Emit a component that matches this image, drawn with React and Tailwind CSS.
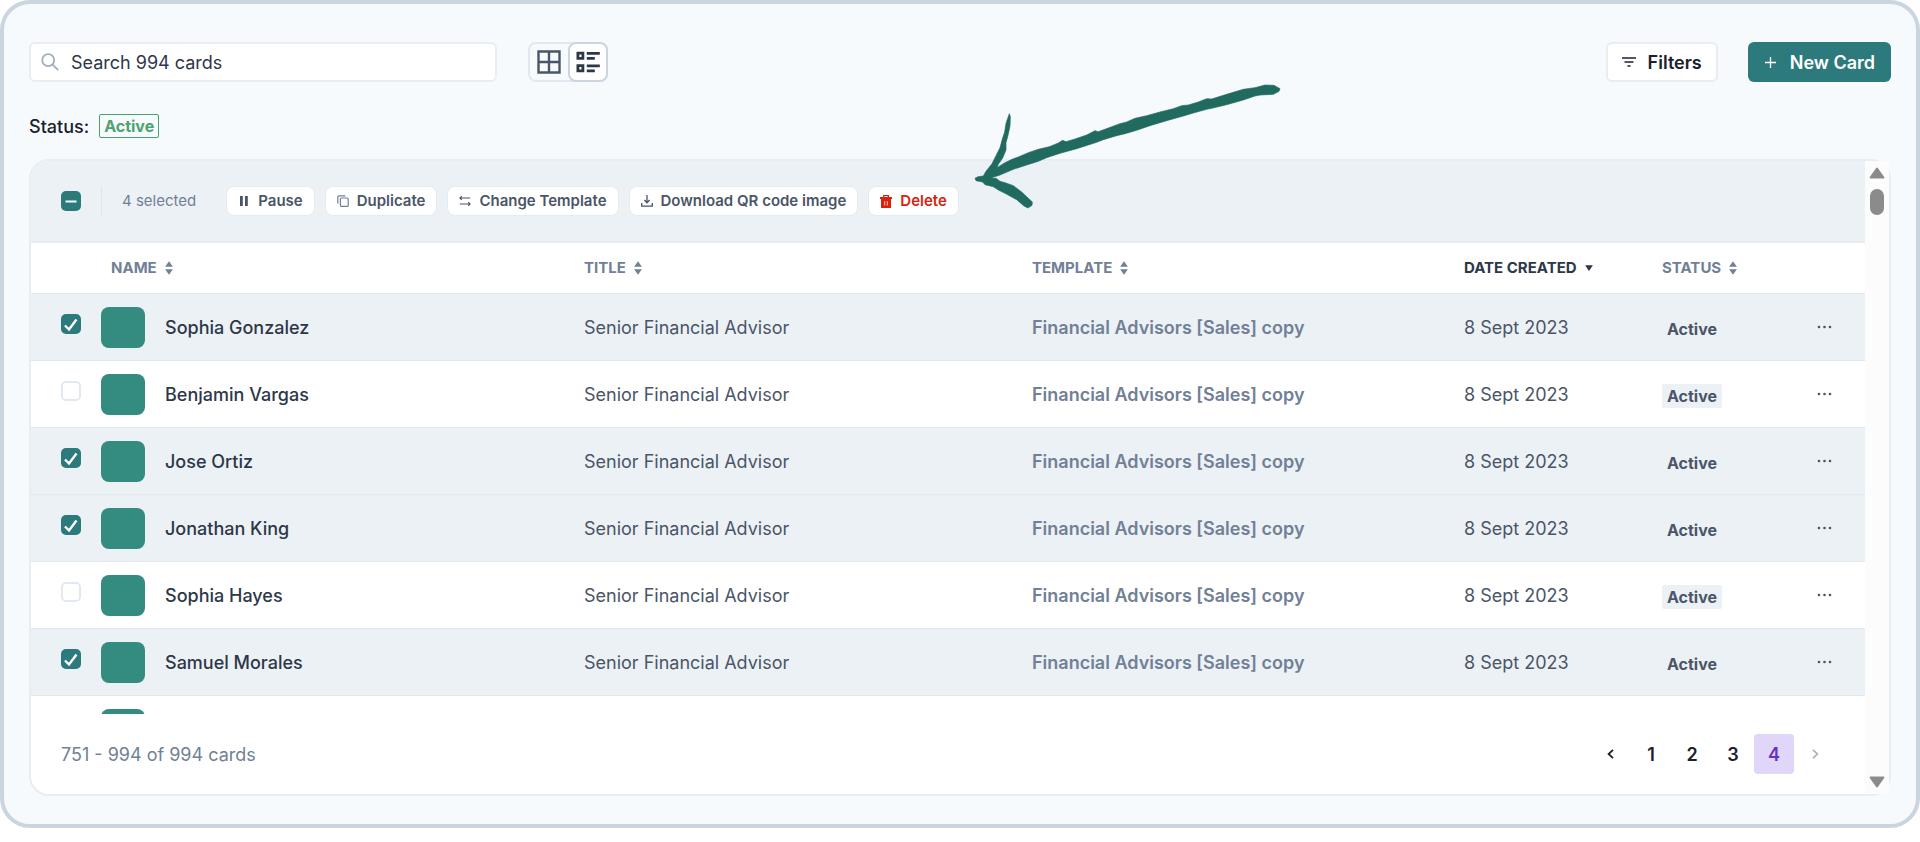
import React, { useState } from 'react';

const rows = [
  { id: 1, name: 'Sophia Gonzalez', checked: true },
  { id: 2, name: 'Benjamin Vargas', checked: false },
  { id: 3, name: 'Jose Ortiz', checked: true },
  { id: 4, name: 'Jonathan King', checked: true },
  { id: 5, name: 'Sophia Hayes', checked: false },
  { id: 6, name: 'Samuel Morales', checked: true },
];

const SortIcon = () => (
  <svg className="w-2 h-[14px]" viewBox="0 0 8 14" fill="currentColor" aria-hidden="true">
    <path d="M4 0.3 7.9 5.8H0.1zM4 13.7 0.1 8.2h7.8z" />
  </svg>
);

const SortDownIcon = () => (
  <svg className="w-2 h-[6px]" viewBox="0 0 8 6" fill="currentColor" aria-hidden="true">
    <path d="M0.1 0.2h7.8L4 5.9z" />
  </svg>
);

const Checkbox = ({ label, checked, onChange }) => (
  <label className="grid w-5 h-5">
    <input
      type="checkbox"
      aria-label={label}
      checked={checked}
      onChange={onChange}
      className="appearance-none col-start-1 row-start-1 w-5 h-5 rounded-[5px] border-2 border-[#e2e8f0] bg-white checked:bg-[#2c7a7b] checked:border-[#2c7a7b]"
    />
    {checked && (
      <svg className="col-start-1 row-start-1 w-5 h-5 pointer-events-none" viewBox="0 0 20 20" fill="none" stroke="#fff" strokeWidth="2.4">
        <path d="M4 11.5 8 15.5 15.5 5.5" />
      </svg>
    )}
  </label>
);

const ActionButton = ({ children, danger }) => (
  <button
    className={
      'flex items-center gap-2 h-[30px] px-[11px] rounded-lg bg-white border border-[#e6ebf1] text-[15px] font-semibold whitespace-nowrap ' +
      (danger ? 'text-[#d9230f]' : 'text-[#4a5568]')
    }
  >
    {children}
  </button>
);

const Toolbar = () => (
  <div className="flex items-center justify-between">
    <div className="flex items-center gap-[31px]">
      <div className="flex items-center gap-3 w-[468px] h-10 px-[10px] rounded-md bg-white border-2 border-[#e8edf3]">
        <svg className="w-[18px] h-[18px] text-[#a0aec0]" viewBox="0 0 18 18" fill="none" stroke="currentColor" strokeWidth="1.8" aria-hidden="true">
          <circle cx="7.2" cy="7.2" r="6" />
          <path d="m11.6 11.6 5.6 5.6" />
        </svg>
        <input
          type="text"
          aria-label="Search cards"
          placeholder="Search 994 cards"
          className="flex-1 min-w-0 outline-none bg-transparent text-[18px] text-[#1a202c] placeholder:text-[#2d3748]"
        />
      </div>
      <div className="flex items-center h-10 rounded-lg border-2 border-[#e2e8f0]">
        <button aria-label="Grid view" className="flex items-center justify-center w-[38px] h-9">
          <svg className="w-6 h-6 text-[#4a5568]" viewBox="0 0 24 24" fill="none" stroke="currentColor" strokeWidth="2.4">
            <path d="M1.5 1.5h21v21h-21zM12 1.5v21M1.5 12h21" />
          </svg>
        </button>
        <button aria-label="List view" className="flex items-center justify-center w-10 h-10 -mr-[2px] rounded-lg bg-white border-2 border-[#cbd5e0]">
          <svg className="w-6 h-[22px] text-[#2d3748]" viewBox="0 0 24 22" fill="none" stroke="currentColor" strokeWidth="2.8">
            <path d="M1.9 2.2h5v5.2h-5zM1.9 14.6h5v5.2h-5zM10.8 2.4h13M10.8 7.4h8M10.8 14.8h13M10.8 19.8h8" />
          </svg>
        </button>
      </div>
    </div>
    <div className="flex items-center gap-[30px]">
      <button className="flex items-center gap-3 h-10 px-[14px] rounded-md bg-white border-2 border-[#e8edf3] text-[18px] font-semibold text-[#1a202c]">
        <svg className="w-[14px] h-[10px]" viewBox="0 0 14 10" stroke="currentColor" strokeWidth="1.6" aria-hidden="true">
          <path d="M0 1h14M2.5 5h9M5.5 9h3" />
        </svg>
        Filters
      </button>
      <button className="flex items-center gap-[14px] h-10 px-4 rounded-md bg-[#2c7a7b] text-[18px] font-semibold text-white">
        <svg className="w-[11px] h-[11px] ml-px" viewBox="0 0 11 11" stroke="currentColor" strokeWidth="1.3" aria-hidden="true">
          <path d="M5.5 0v11M0 5.5h11" />
        </svg>
        New Card
      </button>
    </div>
  </div>
);

const SelectionBar = () => (
  <div className="flex items-center h-[82px] pl-[30px] rounded-tl-[18px] bg-[#ecf1f5] border-b-2 border-[#e6ebf1]">
    <label className="grid w-5 h-5">
      <input
        type="checkbox"
        aria-label="Select all cards"
        defaultChecked
        className="appearance-none col-start-1 row-start-1 w-5 h-5 rounded-[5px] bg-[#2c7a7b]"
      />
      <svg className="col-start-1 row-start-1 w-5 h-5 pointer-events-none" viewBox="0 0 20 20" stroke="#fff" strokeWidth="2">
        <path d="M4.5 10.5h11" />
      </svg>
    </label>
    <div className="w-px h-[30px] ml-5 mr-5 bg-[#dfe5ec]" />
    <span className="mr-[30px] text-[15px] text-[#718096]">4 selected</span>
    <div className="flex items-center gap-[10px]">
      <ActionButton>
        <svg className="w-3 h-[10px]" viewBox="0 0 12 10" fill="currentColor" aria-hidden="true">
          <path d="M2 0h2.8v10H2zM7 0h2.8v10H7z" />
        </svg>
        Pause
      </ActionButton>
      <ActionButton>
        <svg className="w-3 h-3 text-[#718096]" viewBox="0 0 12 12" fill="none" stroke="currentColor" strokeWidth="1.2" aria-hidden="true">
          <rect x="3.4" y="3" width="7.8" height="8.4" rx="1" />
          <path d="M0.8 8.6V1.8q0-1 1-1h6.6" />
        </svg>
        Duplicate
      </ActionButton>
      <ActionButton>
        <svg className="w-3 h-3" viewBox="0 0 12 12" fill="none" stroke="currentColor" strokeWidth="1.1" aria-hidden="true">
          <path d="M0.8 3h10.4M2.8 1.2 0.9 3l1.9 1.8M0.8 9h10.4M9.2 7.2 11.1 9l-1.9 1.8" />
        </svg>
        Change Template
      </ActionButton>
      <ActionButton>
        <svg className="w-3 h-3" viewBox="0 0 12 12" fill="none" stroke="currentColor" strokeWidth="1.3" aria-hidden="true">
          <path d="M6 0v7.6M3.4 5 6 7.8 8.6 5M0.7 8v3.2h10.6V8" />
        </svg>
        Download QR code image
      </ActionButton>
      <ActionButton danger>
        <svg className="w-3 h-[13px]" viewBox="0 0 12 13" aria-hidden="true">
          <path fill="currentColor" fillRule="evenodd" d="M0 2h3V0h6v2h3v2H0zM4.4 1.1V2h3.2v-.9zM1 4h10v9H1z" />
          <path stroke="#fff" strokeWidth="0.8" d="M4.7 6.2v4.2M7.3 6.2v4.2" />
        </svg>
        Delete
      </ActionButton>
    </div>
  </div>
);

const Th = ({ children, active, className = '' }) => (
  <th scope="col" className={'p-0 text-left font-bold ' + className}>
    <button className={'flex items-center gap-2 ' + (active ? 'text-[#2d3748]' : 'text-[#718096]')}>
      {children}
      {active ? <SortDownIcon /> : <SortIcon />}
    </button>
  </th>
);

const Avatar = () => <div className="w-11 h-[41px] rounded-lg bg-[#348b7f]" />;

const CardsTable = () => {
  const [selected, setSelected] = useState(rows.filter((r) => r.checked).map((r) => r.id));

  const toggle = (id) =>
    setSelected((prev) => (prev.includes(id) ? prev.filter((x) => x !== id) : [...prev, id]));

  return (
    <div className="max-h-[471px] overflow-hidden">
      <table className="w-full table-fixed border-separate border-spacing-0 text-[18px]">
        <colgroup>
          <col className="w-[70px]" />
          <col className="w-[483px]" />
          <col className="w-[448px]" />
          <col className="w-[432px]" />
          <col className="w-[198px]" />
          <col className="w-[138px]" />
          <col className="w-[65px]" />
        </colgroup>
        <thead>
          <tr className="h-[50px] text-[15px]">
            <td />
            <Th className="pl-[10px]">NAME</Th>
            <Th>TITLE</Th>
            <Th>TEMPLATE</Th>
            <Th active>DATE CREATED</Th>
            <Th>STATUS</Th>
            <td />
          </tr>
        </thead>
        <tbody>
          {rows.map((row) => {
            const on = selected.includes(row.id);
            return (
              <tr
                key={row.id}
                className={'h-[67px] *:p-0 *:border-t *:border-[#e2e8f0] ' + (on ? 'bg-[#ecf1f5]' : 'bg-white')}
              >
                <td>
                  <div className="pl-[30px] pb-[6px]">
                    <Checkbox label={'Select ' + row.name} checked={on} onChange={() => toggle(row.id)} />
                  </div>
                </td>
                <td>
                  <div className="flex items-center gap-5 font-medium text-[#2d3748]">
                    <Avatar />
                    {row.name}
                  </div>
                </td>
                <td className="text-[#4a5568]">Senior Financial Advisor</td>
                <td className="font-semibold text-[#718096]">Financial Advisors [Sales] copy</td>
                <td className="text-[#4a5568]">8 Sept 2023</td>
                <td>
                  <span className="inline-block px-[5px] rounded-xs bg-[#ecf1f5] text-[16px] leading-6 font-bold text-[#4a5568] align-middle">Active</span>
                </td>
                <td>
                  <button aria-label="More actions" className="block ml-[17px]">
                    <svg className="w-4 h-1" viewBox="0 0 16 4" fill="#4a5568">
                      <circle cx="2" cy="2" r="1.3" />
                      <circle cx="7.5" cy="2" r="1.3" />
                      <circle cx="13" cy="2" r="1.3" />
                    </svg>
                  </button>
                </td>
              </tr>
            );
          })}
          <tr className="h-[67px] *:p-0 *:border-t *:border-[#e2e8f0]">
            <td />
            <td><Avatar /></td>
            <td colSpan={5} />
          </tr>
        </tbody>
      </table>
    </div>
  );
};

const Pagination = () => (
  <div className="flex items-center justify-between h-20 px-[30px] text-[18px]">
    <span className="text-[#718096]">751 - 994 of 994 cards</span>
    <nav aria-label="Pages" className="flex items-center gap-px font-semibold text-[#1a202c]">
      <button aria-label="Previous page" className="flex items-center justify-center w-10 h-10">
        <svg className="w-[7px] h-[10px]" viewBox="0 0 7 10" fill="none" stroke="currentColor" strokeWidth="1.8">
          <path d="M6 0.8 1.6 5 6 9.2" />
        </svg>
      </button>
      <button className="w-10 h-10">1</button>
      <button className="w-10 h-10">2</button>
      <button className="w-10 h-10">3</button>
      <button aria-current="page" className="w-10 h-10 rounded-sm bg-[#e0d6f9] text-[#6530c4]">4</button>
      <button aria-label="Next page" className="flex items-center justify-center w-10 h-10 text-[#a9adb5]">
        <svg className="w-[7px] h-[10px]" viewBox="0 0 7 10" fill="none" stroke="currentColor" strokeWidth="1.6">
          <path d="M1 0.8 5.4 5 1 9.2" />
        </svg>
      </button>
    </nav>
  </div>
);

const Scrollbar = () => (
  <div className="flex flex-col items-center w-6 pt-[6px] pb-[6px] bg-[#fcfcfc]">
    <svg className="w-4 h-3" viewBox="0 0 16 12" fill="#8b8b8b" stroke="#8b8b8b" strokeWidth="2" strokeLinejoin="round">
      <path d="M8 1.5 14.4 10.6H1.6z" />
    </svg>
    <div className="w-[14px] h-[26px] mt-[10px] rounded-full bg-[#8b8b8b]" />
    <svg className="w-4 h-3 mt-auto" viewBox="0 0 16 12" fill="#8b8b8b" stroke="#8b8b8b" strokeWidth="2" strokeLinejoin="round">
      <path d="M8 10.5 14.4 1.4H1.6z" />
    </svg>
  </div>
);

// Hand drawn arrow that points at the bulk actions
const Arrow = () => (
  <svg
    className="absolute left-[956px] top-[66px] w-[340px] h-[150px] pointer-events-none"
    viewBox="0 0 1020 450"
    fill="#216a60"
    stroke="#216a60"
    strokeWidth="2"
    strokeLinejoin="round"
    aria-hidden="true"
  >
    <path d="M148 131 151 140 150 168 144 196 138 218 138 240 128 264 115 283 111 293 135 278 158 267 175 261 205 248 235 238 268 230 295 219 308 211 318 215 345 207 380 195 405 182 415 185 445 174 480 161 500 156 525 145 560 137 600 126 640 116 665 107 685 105 715 96 740 86 755 87 800 73 850 58 885 53 915 45 942 46 960 56 957 64 940 73 900 75 885 78 850 90 800 104 755 115 740 118 700 129 670 138 620 152 570 167 530 181 495 191 470 197 430 209 410 217 350 236 300 250 260 263 235 274 200 285 160 298 120 315 92 324 108 325 120 334 135 338 160 347 185 366 200 380 217 396 216 406 204 414 192 408 170 389 135 370 115 360 100 350 75 344 68 336 48 332 45 325 54 320 70 318 78 304 96 281 108 257 120 233 127 207 134 186 138 160z" />
  </svg>
);

export default function App() {
  return (
    <div className="relative min-h-[828px] px-[25px] pt-[38px] rounded-[30px] border-4 border-[#cbd5e0] bg-[#f7fafc] font-[Inter,'Liberation_Sans',sans-serif]">
      <Toolbar />
      <div className="flex items-center gap-[10px] h-6 mt-8 text-[18px]">
        <span className="font-medium text-[#1a202c]">Status:</span>
        <span className="px-1 rounded-xs border border-[#48a36d] text-[16px] leading-[22px] font-bold text-[#4ca36f]">Active</span>
      </div>
      <div className="flex mt-[21px] rounded-[20px] border-2 border-[#e8edf3] bg-white">
        <div className="flex-1 min-w-0">
          <SelectionBar />
          <CardsTable />
          <Pagination />
        </div>
        <Scrollbar />
      </div>
      <Arrow />
    </div>
  );
}
